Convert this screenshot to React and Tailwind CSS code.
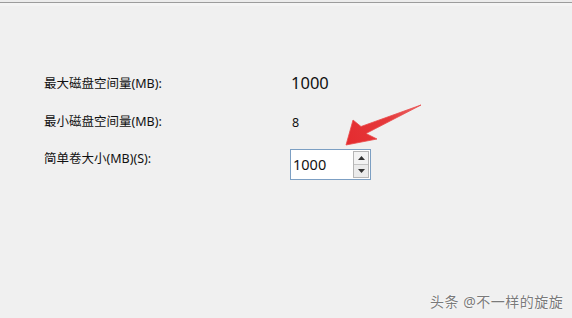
import React from "react";

export default function App() {
  const font = { fontFamily: '"Noto Sans", "Noto Sans CJK SC", sans-serif' };
  return (
    <div
      className="relative w-[572px] h-[318px] bg-[#f0f0f0] overflow-hidden text-[#111]"
      style={font}
    >
      <div className="h-[2px] bg-[#ececec]" />
      <div className="h-px bg-[#9c9c9c]" />
      <div className="h-[3px] bg-[#f4f4f4]" />
      <div className="pl-[44px] pt-[67px] flex flex-col">
        <div className="flex items-center h-[20px]">
          <div className="w-[246px] text-[12.5px] leading-[20px] pt-px">最大磁盘空间量(MB):</div>
          <div className="text-[16.5px] leading-[20px] pl-[1px]">1000</div>
        </div>
        <div className="flex items-center h-[20px] mt-[19px]">
          <div className="w-[246px] text-[12.5px] leading-[20px]">最小磁盘空间量(MB):</div>
          <div className="text-[12.5px] leading-[20px] pl-[2px] pt-px">8</div>
        </div>
        <div className="flex items-start mt-[17px]">
          <div className="w-[246px] text-[12.5px] leading-[16px] mt-[2px]">简单卷大小(MB)(S):</div>
          <div className="w-[81px] h-[31px] border border-[#7c9fc3] bg-white flex items-stretch">
            <div className="flex-1 flex items-center pl-[2px] text-[14.5px] leading-none">1000</div>
            <div className="w-[16px] my-[1px] mr-[1px] flex flex-col border border-[#b6b6b6]">
              <div className="flex-1 flex items-center justify-center bg-[#f3f3f3] border-b border-[#c4c4c4]">
                <svg width="7" height="4" viewBox="0 0 7 4"><polygon points="3.5,0 7,4 0,4" fill="#333" /></svg>
              </div>
              <div className="flex-1 flex items-center justify-center bg-[#ebebeb]">
                <svg width="7" height="4" viewBox="0 0 7 4"><polygon points="0,0 7,0 3.5,4" fill="#333" /></svg>
              </div>
            </div>
          </div>
        </div>
      </div>

      <svg className="absolute left-0 top-0" width="572" height="318" viewBox="0 0 572 318">
        <defs>
          <linearGradient id="ag" x1="421" y1="105" x2="346" y2="145" gradientUnits="userSpaceOnUse">
            <stop offset="0" stopColor="#e96a6a" />
            <stop offset="0.4" stopColor="#e53a3c" />
            <stop offset="1" stopColor="#e42b2f" />
          </linearGradient>
        </defs>
        <polygon
          points="346,145 353,120 361,126.5 421,105 366,133.5 377,139"
          fill="url(#ag)"
          stroke="#ea4a4a"
          strokeWidth="0.8"
          strokeLinejoin="round"
        />
      </svg>

      <div className="absolute left-[430px] top-[292px] text-[14px] leading-[20px] text-[#7a7a7a] tracking-[0.5px] [text-shadow:0_0_1px_#fff,0_0_2px_#fff]">
        头条 @不一样的旋旋
      </div>
    </div>
  );
}
